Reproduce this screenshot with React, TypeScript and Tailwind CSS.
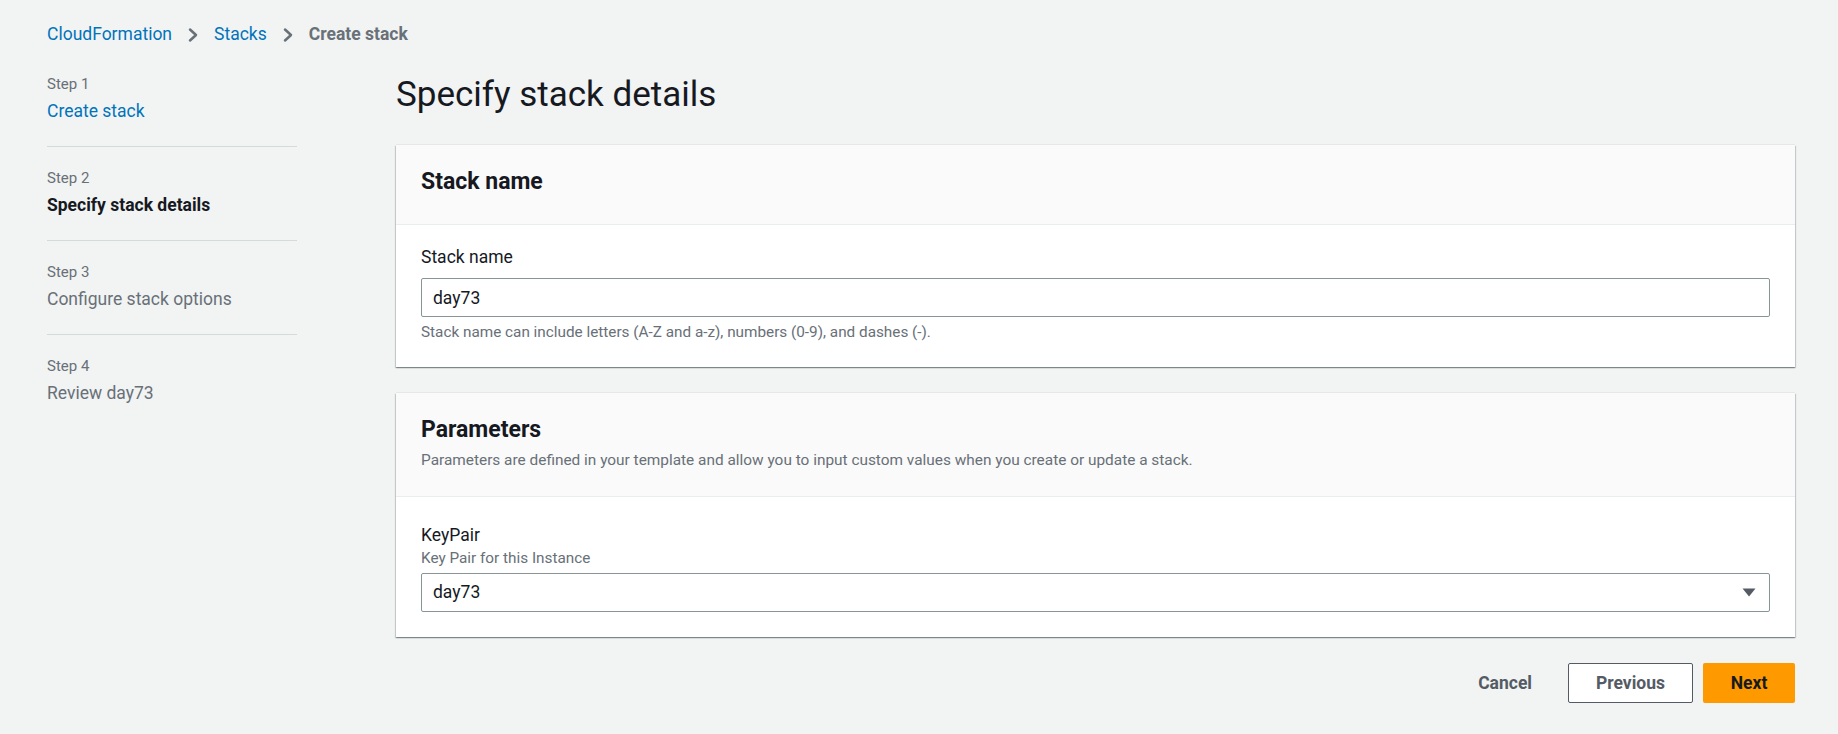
import React from 'react'

const FONT = "font-['Roboto','Liberation_Sans',Arial,sans-serif]"

function Chevron() {
  return (
    <svg width="12" height="16" viewBox="0 0 12 16" className="mx-[15px] shrink-0" aria-hidden="true">
      <path d="M3 2.5 L9 8 L3 13.5" fill="none" stroke="#687078" strokeWidth="2.5" strokeLinecap="round" strokeLinejoin="round" />
    </svg>
  )
}

interface StepProps {
  step: number
  title: string
  state: 'done' | 'current' | 'todo'
  first?: boolean
  last?: boolean
}

function Step({ step, title, state, first, last }: StepProps) {
  // the link / bold / grey look follows the wizard state
  const titleClass =
    state === 'done'
      ? 'text-[#0073bb]'
      : state === 'current'
        ? 'font-bold text-[#16191f]'
        : 'text-[#687078]'

  return (
    <li className={`${first ? '' : 'pt-[21px]'} ${last ? '' : 'pb-[22px] border-b border-[#d5dbdb]'}`}>
      <div className="text-[15px] leading-[20px] text-[#687078]">Step {step}</div>
      <div className={`mt-[5px] text-[17.5px] leading-[25px] ${titleClass}`}>{title}</div>
    </li>
  )
}

const cardShadow =
  'shadow-[0_1px_1px_0_rgba(0,28,36,0.3),1px_1px_1px_0_rgba(0,28,36,0.15),-1px_1px_1px_0_rgba(0,28,36,0.15),0_-1px_0_0_rgba(0,28,36,0.05)]'

export default function App() {
  return (
    <div className={`min-h-screen bg-[#f2f3f3] pl-[47px] pr-[43px] text-[#16191f] ${FONT}`}>
      {/* breadcrumbs */}
      <nav className="pt-[22px] flex items-center text-[17.5px] leading-[25px]">
        <span className="text-[#0073bb]">CloudFormation</span>
        <Chevron />
        <span className="text-[#0073bb]">Stacks</span>
        <Chevron />
        <span className="font-bold text-[#687078]">Create stack</span>
      </nav>

      <div className="mt-[27px] flex gap-[99px]">
        {/* wizard steps */}
        <ol className="w-[250px] shrink-0">
          <Step step={1} title="Create stack" state="done" first />
          <Step step={2} title="Specify stack details" state="current" />
          <Step step={3} title="Configure stack options" state="todo" />
          <Step step={4} title="Review day73" state="todo" last />
        </ol>

        <main className="flex-1 min-w-0">
          <h1 className="text-[35px] leading-[42px] font-normal text-[#16191f]">Specify stack details</h1>

          {/* stack name */}
          <section className={`mt-[29px] bg-white ${cardShadow}`}>
            <div className="bg-[#fafafa] border-b border-[#eaeded] px-[25px] pt-[22px] pb-[27px]">
              <h2 className="text-[23px] leading-[30px] font-bold">Stack name</h2>
            </div>
            <div className="px-[25px] pt-[20px] pb-[25px]">
              <label className="block text-[17.5px] leading-[25px]">Stack name</label>
              <input
                readOnly
                value="day73"
                className="mt-[8px] block w-full h-[39px] border border-[#879596] rounded-[2px] bg-white pl-[11px] text-[17.5px] text-[#16191f] outline-none"
              />
              <p className="mt-[5px] text-[15.3px] leading-[20px] text-[#687078]">
                Stack name can include letters (A-Z and a-z), numbers (0-9), and dashes (-).
              </p>
            </div>
          </section>

          {/* parameters */}
          <section className={`mt-[26px] bg-white ${cardShadow}`}>
            <div className="bg-[#fafafa] border-b border-[#eaeded] px-[25px] pt-[22px] pb-[26px]">
              <h2 className="text-[23px] leading-[30px] font-bold">Parameters</h2>
              <p className="mt-[5px] text-[15.4px] leading-[20px] text-[#687078]">
                Parameters are defined in your template and allow you to input custom values when you create or update a stack.
              </p>
            </div>
            <div className="px-[25px] pt-[26px] pb-[25px]">
              <label className="block text-[17.5px] leading-[25px]">KeyPair</label>
              <div className="text-[15.3px] leading-[20px] text-[#687078]">Key Pair for this Instance</div>
              <div className="mt-[5px] flex items-center justify-between h-[39px] border border-[#879596] rounded-[2px] bg-white pl-[11px] pr-[13px]">
                <span className="text-[17.5px]">day73</span>
                <svg width="14" height="9" viewBox="0 0 14 9" aria-hidden="true">
                  <path d="M0.5 0.5 H13.5 L7 8.5 Z" fill="#545b64" />
                </svg>
              </div>
            </div>
          </section>

          {/* actions */}
          <div className="mt-[26px] flex justify-end items-center gap-[10px] text-[17.5px] font-bold">
            <button className="h-[40px] px-[26px] text-[#545b64]">Cancel</button>
            <button className="h-[40px] w-[125px] border border-[#545b64] rounded-[2px] bg-white text-[#545b64]">
              Previous
            </button>
            <button className="h-[40px] w-[92px] rounded-[2px] bg-[#ff9900] text-[#16191f]">Next</button>
          </div>
        </main>
      </div>
    </div>
  )
}
